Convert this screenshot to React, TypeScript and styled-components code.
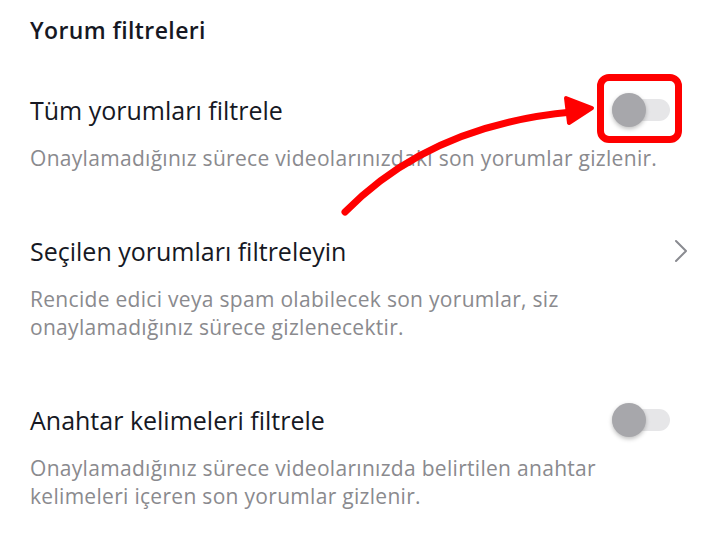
import { FC } from 'react';
import styled, { createGlobalStyle } from 'styled-components';

const GlobalStyle = createGlobalStyle`
  html, body {
    margin: 0;
    padding: 0;
    background: #ffffff;
  }
  body {
    font-family: "Open Sans", "Noto Sans", "Liberation Sans", sans-serif;
    font-variant-ligatures: none;
    -webkit-font-smoothing: antialiased;
  }
`;

type Item = {
  title: string;
  desc: string[];
  control: 'toggle' | 'chevron';
  highlighted?: boolean;
};

const items: Item[] = [
  {
    title: 'Tüm yorumları filtrele',
    desc: ['Onaylamadığınız sürece videolarınızdaki son yorumlar gizlenir.'],
    control: 'toggle',
    highlighted: true,
  },
  {
    title: 'Seçilen yorumları filtreleyin',
    desc: [
      'Rencide edici veya spam olabilecek son yorumlar, siz',
      'onaylamadığınız sürece gizlenecektir.',
    ],
    control: 'chevron',
  },
  {
    title: 'Anahtar kelimeleri filtrele',
    desc: [
      'Onaylamadığınız sürece videolarınızda belirtilen anahtar',
      'kelimeleri içeren son yorumlar gizlenir.',
    ],
    control: 'toggle',
  },
];

const Toggle: FC<{ highlighted?: boolean }> = ({ highlighted }) => (
  <SToggle>
    <STrack />
    <SKnob />
    {highlighted && <SHighlight />}
  </SToggle>
);

const Chevron: FC = () => (
  <svg width="14" height="24" viewBox="0 0 14 24" fill="none">
    <path d="M2 2 L12 12 L2 22" stroke="#8a8b91" strokeWidth="2" strokeLinecap="round" strokeLinejoin="round" />
  </svg>
);

export default function App() {
  return (
    <>
      <GlobalStyle />
      <SPage>
        <SHeading>Yorum filtreleri</SHeading>
        <SList>
          {items.map((item) => (
            <SItem key={item.title}>
              <SRow>
                <STitle>{item.title}</STitle>
                {item.control === 'toggle' ? <Toggle highlighted={item.highlighted} /> : <Chevron />}
              </SRow>
              <SDesc>
                {item.desc.map((line) => (
                  <span key={line}>{line}</span>
                ))}
              </SDesc>
            </SItem>
          ))}
        </SList>
        <SArrow width="720" height="556" viewBox="0 0 720 556">
          <path d="M345 212 Q 430 125 572 112" stroke="#ff0000" strokeWidth="7" strokeLinecap="round" fill="none" />
          <path d="M566 98 L592 108 L569 123 Z" fill="#ff0000" stroke="#ff0000" strokeWidth="4" strokeLinejoin="round" />
        </SArrow>
      </SPage>
    </>
  );
}

const SPage = styled.div`
  position: relative;
  width: 720px;
  height: 556px;
  box-sizing: border-box;
  padding: 14px 32px 0 30px;
  overflow: hidden;
`;

const SHeading = styled.h1`
  margin: 0;
  font-size: 23px;
  line-height: 32px;
  font-weight: 600;
  letter-spacing: 0.4px;
  color: #161823;
`;

const SList = styled.div`
  display: flex;
  flex-direction: column;
  gap: 59px;
  margin-top: 44px;
`;

const SItem = styled.div`
  display: flex;
  flex-direction: column;
  gap: 14px;
`;

const SRow = styled.div`
  display: flex;
  align-items: center;
  justify-content: space-between;
  height: 40px;
`;

const STitle = styled.div`
  font-size: 25px;
  line-height: 40px;
  color: #161823;
`;

const SDesc = styled.p`
  display: flex;
  flex-direction: column;
  margin: 0;
  font-size: 21px;
  line-height: 28px;
  letter-spacing: 0.3px;
  color: #8a8a8e;
`;

const SToggle = styled.div`
  position: relative;
  width: 58px;
  height: 36px;
  margin-right: 18px;
  display: flex;
  align-items: center;
`;

const STrack = styled.div`
  width: 58px;
  height: 22px;
  border-radius: 11px;
  background: #e6e6e8;
`;

const SKnob = styled.div`
  position: absolute;
  left: 0;
  top: 1px;
  width: 34px;
  height: 34px;
  border-radius: 50%;
  background: #a7a7ab;
  box-shadow: 0 2px 4px rgba(0, 0, 0, 0.25);
`;

const SHighlight = styled.div`
  position: absolute;
  left: -15px;
  right: -12px;
  top: -18px;
  bottom: -15px;
  border: 7px solid #ff0000;
  border-radius: 12px;
`;

const SArrow = styled.svg`
  position: absolute;
  left: 0;
  top: 0;
  pointer-events: none;
`;
